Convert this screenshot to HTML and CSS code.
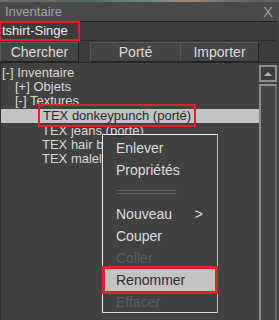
FILE: index.html
```html
<!DOCTYPE html>
<html lang="fr">
<head>
    <meta charset="UTF-8">
    <title>Inventaire</title>
    <link rel="stylesheet" href="styles.css">
</head>
<body>
    <div class="window">
        <!-- strip of the game scene behind the window -->
        <div class="scene"></div>

        <!-- Title bar -->
        <div class="titlebar">
            <span class="title">Inventaire</span>
            <span class="close">X</span>
        </div>

        <!-- Search field -->
        <div class="search">
            <span class="search-text">tshirt-Singe</span>
        </div>

        <!-- Buttons -->
        <div class="buttons">
            <div class="btn btn-search">Chercher</div>
            <div class="btn btn-worn">Porté</div>
            <div class="btn btn-import">Importer</div>
        </div>

        <!-- Tree -->
        <div class="tree">
            <div class="tree-list">
                <div class="row">[-] Inventaire</div>
                <div class="row indent1">[+] Objets</div>
                <div class="row indent1">[-] Textures</div>
                <div class="row indent2 selected"><span class="marked">TEX donkeypunch (porté)</span></div>
                <div class="row indent2">TEX jeans (porté)</div>
                <div class="row indent2">TEX hair blond</div>
                <div class="row indent2">TEX maleleg</div>
            </div>
            <div class="scrollbar">
                <div class="scroll-up"><span class="arrow"></span></div>
                <div class="scroll-track"></div>
            </div>
        </div>

        <!-- Context menu -->
        <div class="menu">
            <div class="item">Enlever</div>
            <div class="item">Propriétés</div>
            <div class="item separator">==========</div>
            <div class="item"><span>Nouveau</span><span class="sub">&gt;</span></div>
            <div class="item">Couper</div>
            <div class="item disabled">Coller</div>
            <div class="item active">Renommer</div>
            <div class="item disabled">Effacer</div>
        </div>
    </div>
</body>
</html>
```

FILE: styles.css
```css
body {
    margin: 0;
    padding: 0;
    background-color: #2a2a2a;
    font-family: "Liberation Sans", Arial, sans-serif;
    font-size: 13px;
}

.window {
    position: relative;
    width: 279px;
    height: 320px;
    overflow: hidden;
    background-color: #414141;
    display: flex;
    flex-direction: column;
}

.scene {
    height: 2px;
    background: linear-gradient(to right, #6a6a66 0%, #5d6d68 35%, #7c8a86 60%, #a48a6e 68%, #6f6f6c 80%, #5e5e5e 100%);
}

/* Title bar */
.titlebar {
    height: 19px;
    background-color: #4a4a4a;
    display: flex;
    align-items: center;
    justify-content: space-between;
    padding: 0 6px 0 5px;
    color: #a3a3a3;
}

.close {
    font-size: 15px;
    color: #9a9a9a;
}

/* Search field */
.search {
    height: 18px;
    margin-right: 2px;
    border-top: 1px solid #1c1c1c;
    border-bottom: 1px solid #2c2c2c;
    background-color: #3c3c3c;
    display: flex;
    align-items: center;
}

.search-text {
    color: #eeeeee;
    padding: 0 10px 0 1px;
    line-height: 16px;
    outline: 2px solid #e3202a;
    margin-left: 1px;
}

/* Buttons */
.buttons {
    height: 21px;
    display: flex;
    align-items: center;
    background-color: #3c3c3c;
    border-bottom: 1px solid #262626;
}

.btn {
    height: 20px;
    box-sizing: border-box;
    border: 1px solid #232323;
    border-top-color: #5a5a5a;
    border-left-color: #5a5a5a;
    background-color: #454545;
    color: #dcdcdc;
    display: flex;
    align-items: center;
    justify-content: center;
    font-size: 14px;
}

.btn-search {
    width: 79px;
}

.btn-worn {
    width: 91px;
    margin-left: 11px;
}

.btn-import {
    width: 79px;
    margin-left: -1px;
}

/* Tree */
.tree {
    flex: 1;
    display: flex;
    border-left: 1px solid #2e2e2e;
}

.tree-list {
    flex: 1;
    padding-top: 3px;
    color: #d8d8d8;
}

.row {
    height: 14px;
    line-height: 14px;
    padding-left: 1px;
    white-space: nowrap;
}

.indent1 {
    padding-left: 14px;
}

.indent2 {
    padding-left: 41px;
}

.selected {
    background-color: #c3c3c3;
    color: #2a2a2a;
    margin-top: 1px;
    margin-bottom: 1px;
}

.marked {
    outline: 2px solid #e3202a;
    outline-offset: 2px;
    padding: 0 1px;
}

/* Scrollbar */
.scrollbar {
    width: 18px;
    margin-right: 2px;
    padding-top: 2px;
    display: flex;
    flex-direction: column;
    gap: 2px;
}

.scroll-up {
    height: 17px;
    box-sizing: border-box;
    border: 2px solid #8c8c8c;
    background-color: #3d3d3d;
    display: flex;
    align-items: center;
    justify-content: center;
}

.arrow {
    width: 0;
    height: 0;
    border-left: 4px solid transparent;
    border-right: 4px solid transparent;
    border-bottom: 4px solid #b4b4b4;
}

.scroll-track {
    flex: 1;
    box-sizing: border-box;
    border: 2px solid #8c8c8c;
    border-right-color: #6a6a6a;
    border-bottom: none;
    background-color: #444444;
}

/* Context menu */
.menu {
    position: absolute;
    left: 102px;
    top: 134px;
    width: 116px;
    height: 179px;
    box-sizing: border-box;
    border: 1px solid #f0f0f0;
    border-right-color: #bdbdbd;
    border-bottom-color: #d8d8d8;
    background-color: #414141;
    padding-top: 2px;
    color: #dedede;
}

.item {
    height: 22px;
    line-height: 22px;
    padding: 0 12px 0 13px;
    display: flex;
    justify-content: space-between;
    font-size: 14px;
}

.separator {
    color: #5e5e5e;
    font-size: 12px;
    letter-spacing: -1px;
}

.sub {
    padding-right: 2px;
}

.disabled {
    color: #5c5c5c;
}

.active {
    background-color: #c3c3c3;
    color: #2e2e2e;
    margin: 0 2px;
    padding-left: 11px;
    outline: 3px solid #e3202a;
}
```
